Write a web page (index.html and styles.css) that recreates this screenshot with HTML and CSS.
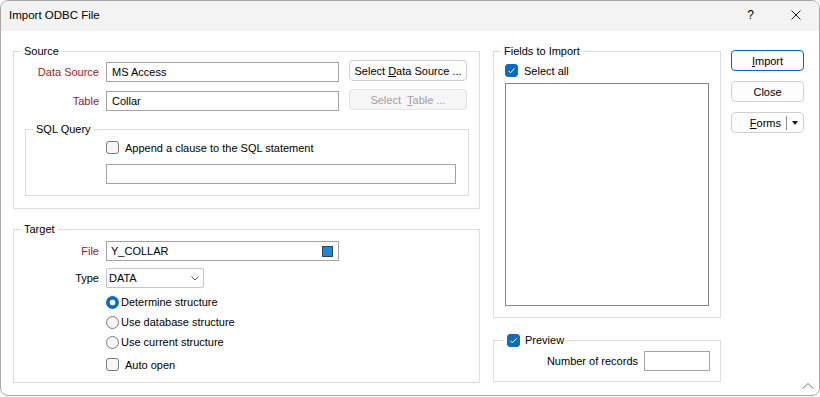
FILE: index.html
```html
<!DOCTYPE html>
<html lang="en">
<head>
    <meta charset="UTF-8" />
    <title>Import ODBC File</title>
    <link rel="stylesheet" href="styles.css">
</head>
<body>
    <div class="window">
        <div class="titlebar">
            <span class="title">Import ODBC File</span>
            <span class="help">?</span>
            <svg class="close-x" width="10" height="10" viewBox="0 0 10 10">
                <path d="M0.5 0.5L9.5 9.5M9.5 0.5L0.5 9.5" stroke="#1b1b1b" stroke-width="1" fill="none"/>
            </svg>
        </div>

        <div class="content">
            <div class="col-left">
                <fieldset class="group source">
                    <legend>Source</legend>
                    <div class="form-row">
                        <span class="field-label red">Data Source</span>
                        <div class="textbox">MS Access</div>
                        <button class="btn side">Select <u>D</u>ata Source ...</button>
                    </div>
                    <div class="form-row">
                        <span class="field-label maroon">Table</span>
                        <div class="textbox">Collar</div>
                        <button class="btn side disabled">Select &nbsp;<u>T</u>able ...</button>
                    </div>

                    <fieldset class="group sql">
                        <legend>SQL Query</legend>
                        <div class="sql-body">
                            <div class="check-row">
                                <span class="checkbox"></span>
                                <span>Append a clause to the SQL statement</span>
                            </div>
                            <div class="textbox wide"></div>
                        </div>
                    </fieldset>
                </fieldset>

                <fieldset class="group target">
                    <legend>Target</legend>
                    <div class="form-row">
                        <span class="field-label maroon">File</span>
                        <div class="textbox file">
                            <span class="file-name">Y_COLLAR</span>
                            <span class="color-swatch"></span>
                        </div>
                    </div>
                    <div class="form-row type-row">
                        <span class="field-label">Type</span>
                        <div class="select">
                            <span class="select-value">DATA</span>
                            <svg width="8" height="5" viewBox="0 0 8 5">
                                <path d="M0.5 0.5L4 4L7.5 0.5" stroke="#555" stroke-width="1" fill="none"/>
                            </svg>
                        </div>
                    </div>
                    <div class="options">
                        <div class="radio-row"><span class="radio on"></span><span>Determine structure</span></div>
                        <div class="radio-row"><span class="radio"></span><span>Use database structure</span></div>
                        <div class="radio-row"><span class="radio"></span><span>Use current structure</span></div>
                        <div class="check-row auto"><span class="checkbox"></span><span>Auto open</span></div>
                    </div>
                </fieldset>
            </div>

            <div class="col-mid">
                <fieldset class="group fields">
                    <legend>Fields to Import</legend>
                    <div class="fields-body">
                        <div class="check-row">
                            <span class="checkbox on">
                                <svg width="11" height="11" viewBox="0 0 11 11"><path d="M2.5 5.8L4.5 7.8L8.5 3.3" stroke="#fff" stroke-width="1" fill="none"/></svg>
                            </span>
                            <span>Select all</span>
                        </div>
                        <div class="listbox"></div>
                    </div>
                </fieldset>

                <fieldset class="group preview">
                    <legend class="check-legend">
                        <span class="checkbox on">
                            <svg width="11" height="11" viewBox="0 0 11 11"><path d="M2.5 5.8L4.5 7.8L8.5 3.3" stroke="#fff" stroke-width="1" fill="none"/></svg>
                        </span>
                        <span>Preview</span>
                    </legend>
                    <div class="records-row">
                        <span>Number of records</span>
                        <div class="textbox small"></div>
                    </div>
                </fieldset>
            </div>

            <div class="col-buttons">
                <button class="btn default"><u>I</u>mport</button>
                <button class="btn">Close</button>
                <button class="btn split">
                    <span class="split-label"><u>F</u>orms</span>
                    <span class="split-sep"></span>
                    <span class="split-arrow"></span>
                </button>
            </div>
        </div>

        <svg class="grip" width="12" height="6" viewBox="0 0 12 6">
            <path d="M0.5 5.5L6 0.5L11.5 5.5" stroke="#7a7a7a" stroke-width="1" fill="none"/>
        </svg>
    </div>
</body>
</html>
```

FILE: styles.css
```css
* {
    box-sizing: border-box;
}

body {
    margin: 0;
    background: #fff;
    font-family: "Liberation Sans", Arial, sans-serif;
    font-size: 11px;
    color: #000;
}

.window {
    position: relative;
    width: 820px;
    height: 396px;
    border: 1px solid #a8a8a8;
    border-radius: 8px;
    overflow: hidden;
    background: #fff;
}

.titlebar {
    height: 30px;
    background: #f3f3f3;
    display: flex;
    align-items: center;
    padding: 0 18px 2px 8px;
}

.title {
    flex: 1;
    font-size: 11.5px;
}

.help {
    font-size: 12px;
    margin-right: 37px;
}

.content {
    display: flex;
    padding: 12px 0 0 12px;
}

.col-left {
    width: 467px;
    display: flex;
    flex-direction: column;
}

.col-mid {
    width: 228px;
    margin-left: 13px;
}

.col-buttons {
    width: 73px;
    margin-left: 10px;
    margin-top: 7px;
    display: flex;
    flex-direction: column;
    gap: 10px;
}

/* group boxes */
.group {
    margin: 0;
    padding: 0;
    border: 1px solid #dcdcdc;
    min-width: 0;
}

.group legend {
    margin-left: 7px;
    padding: 0 3px;
    line-height: 16px;
}

.source {
    padding: 3px 0 12px 0;
}

.sql {
    margin: 10px 10px 0 11px;
    padding: 3px 0 11px 0;
}

.sql-body {
    padding-left: 80px;
}

.target {
    margin-top: 12px;
    padding: 4px 0 10px 0;
}

.fields {
    padding: 4px 0 11px 0;
}

.fields-body {
    padding-left: 11px;
}

.preview {
    margin-top: 14px;
    padding: 3px 10px 10px 0;
}

.group .check-legend {
    display: flex;
    align-items: center;
    margin-left: 10px;
}

/* rows */
.form-row {
    display: flex;
    align-items: flex-start;
}

.form-row + .form-row {
    margin-top: 9px;
}

.form-row.type-row {
    margin-top: 7px;
}

.field-label {
    width: 85px;
    margin-right: 7px;
    text-align: right;
    line-height: 20px;
}

.field-label.red {
    color: #a31a1a;
}

.field-label.maroon {
    color: #8b1848;
}

.textbox {
    width: 233px;
    height: 20px;
    border: 1px solid #a3a3a3;
    padding-left: 5px;
    line-height: 18px;
    background: #fff;
}

.textbox.wide {
    width: 350px;
    margin-top: 9px;
}

.textbox.small {
    width: 66px;
}

.textbox.file {
    display: flex;
    align-items: center;
    padding-left: 4px;
    padding-right: 5px;
}

.file-name {
    flex: 1;
}

.color-swatch {
    width: 11px;
    height: 11px;
    background: #1e88d2;
    border: 1px solid #2c4560;
}

.select {
    width: 98px;
    height: 20px;
    border: 1px solid #c6c6c6;
    border-radius: 2px;
    display: flex;
    align-items: center;
    padding: 0 4px 0 2px;
}

.select-value {
    flex: 1;
}

.options {
    margin-left: 92px;
    margin-top: 4px;
}

.radio-row {
    height: 20px;
    display: flex;
    align-items: center;
}

.check-row {
    height: 15px;
    display: flex;
    align-items: center;
}

.check-row.auto {
    margin-top: 5px;
}

.checkbox {
    width: 13px;
    height: 13px;
    border: 1px solid #7a7a7a;
    border-radius: 3px;
    background: #f6f6f6;
    margin-right: 6px;
    display: flex;
    align-items: center;
    justify-content: center;
}

.checkbox.on {
    background: #0f6cbd;
    border-color: #0f6cbd;
}

.check-legend .checkbox {
    margin-right: 5px;
}

.radio {
    width: 13px;
    height: 13px;
    border: 1px solid #7a7a7a;
    border-radius: 50%;
    background: #f6f6f6;
    margin-right: 2px;
}

.radio.on {
    border: none;
    background: radial-gradient(circle, #fff 0, #fff 2.6px, #0f6cbd 3.2px);
}

.listbox {
    width: 204px;
    height: 223px;
    border: 1px solid #868686;
    margin-top: 5px;
}

.records-row {
    display: flex;
    justify-content: flex-end;
    align-items: center;
    gap: 6px;
}

/* buttons */
.btn {
    font: inherit;
    color: #000;
    height: 21px;
    border: 1px solid #d0d0d0;
    border-radius: 4px;
    background: #fdfdfd;
    padding: 0;
    cursor: default;
}

.btn.side {
    width: 118px;
    margin-left: 10px;
    margin-top: -2px;
}

.btn.disabled {
    color: #a0a0a0;
    background: #f6f6f6;
    border-color: #e3e3e3;
}

.btn.default {
    border-color: #0067c0;
}

.btn.split {
    display: flex;
    align-items: center;
}

.split-label {
    width: 54px;
    text-align: right;
    padding-right: 5px;
}

.split-sep {
    width: 1px;
    height: 14px;
    background: #8a8a8a;
}

.split-arrow {
    flex: 1;
    display: flex;
    justify-content: center;
}

.split-arrow::before {
    content: "";
    border-left: 3.5px solid transparent;
    border-right: 3.5px solid transparent;
    border-top: 4px solid #1b1b1b;
}

.grip {
    position: absolute;
    right: 5px;
    bottom: 6px;
}
```
